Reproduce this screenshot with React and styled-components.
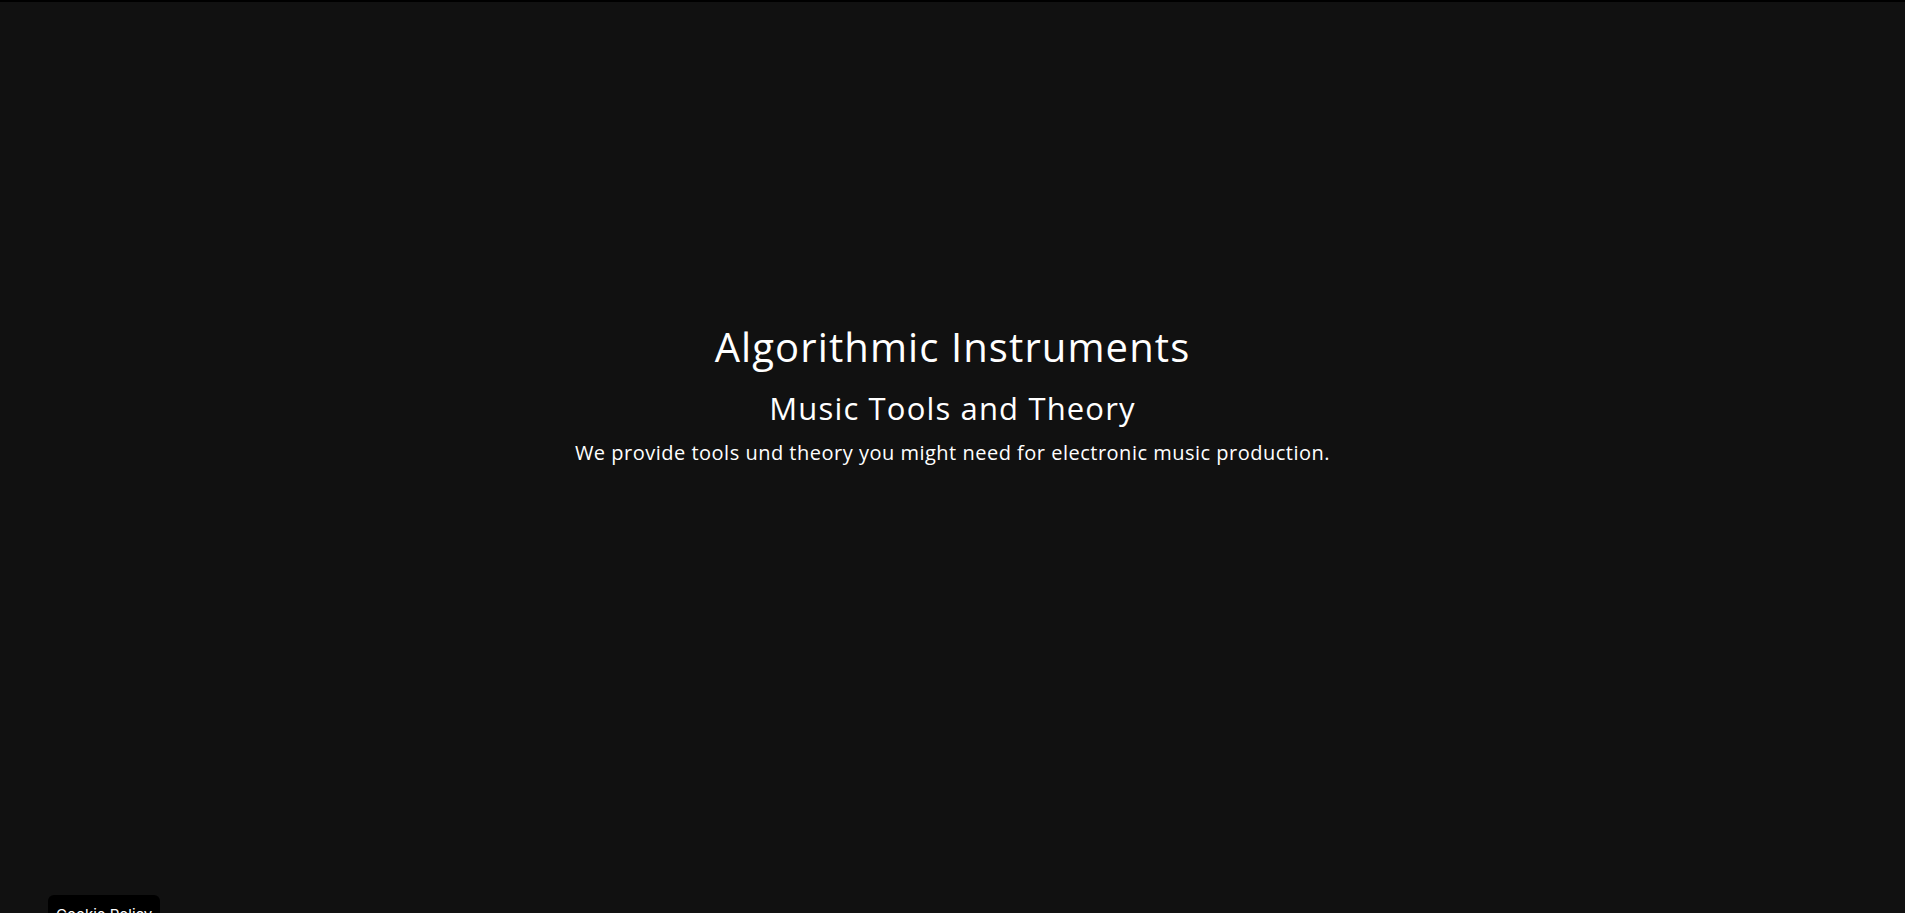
import React from "react";
import styled, { createGlobalStyle } from "styled-components";

const GlobalStyle = createGlobalStyle`
  html, body {
    margin: 0;
    padding: 0;
    background-color: #111111;
    overflow: hidden;
  }

  * {
    box-sizing: border-box;
  }
`;

const Page = styled.main`
  min-height: 100vh;
  border-top: 2px solid #000;
  background-color: #111111;
  color: #fff;
  font-family: "Open Sans", "Liberation Sans", sans-serif;
`;

const Hero = styled.section`
  display: flex;
  flex-direction: column;
  align-items: center;
  text-align: center;
  padding-top: 318px;
`;

const Title = styled.h1`
  margin: 0;
  font-size: 40px;
  font-weight: 400;
  line-height: 54px;
  letter-spacing: 1.1px;
`;

const Subtitle = styled.h2`
  margin: 13px 0 0;
  font-size: 31px;
  font-weight: 400;
  line-height: 42px;
  letter-spacing: 1.15px;
`;

const Lead = styled.p`
  margin: 10px 0 0;
  font-size: 20px;
  font-weight: 400;
  line-height: 28px;
  letter-spacing: 0.5px;
`;

// overlays the page, fixed to the bottom left corner
const CookieButton = styled.button`
  position: fixed;
  left: 48px;
  bottom: -22px;
  padding: 10px 8px 10px 8px;
  border: none;
  border-radius: 6px;
  background-color: #000;
  color: #fff;
  font-family: "Inter", "Liberation Sans", sans-serif;
  font-size: 15px;
  line-height: 20px;
  cursor: pointer;
`;

const App = () => {
  return (
    <>
      <GlobalStyle />
      <Page>
        <Hero>
          <Title>Algorithmic Instruments</Title>
          <Subtitle>Music Tools and Theory</Subtitle>
          <Lead>We provide tools und theory you might need for electronic music production.</Lead>
        </Hero>
        <CookieButton>Cookie Policy</CookieButton>
      </Page>
    </>
  );
};

export default App;
